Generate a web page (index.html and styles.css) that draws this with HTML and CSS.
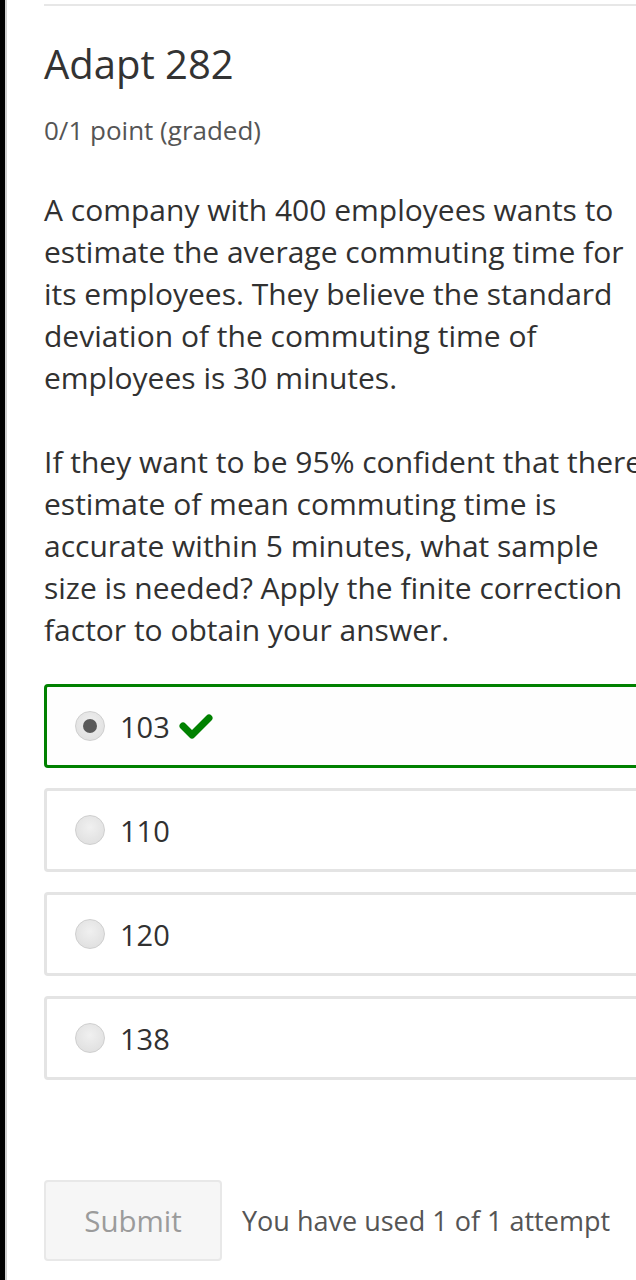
FILE: index.html
```html
<!DOCTYPE html>
<html>
<head>
<meta charset="utf-8">
<link rel="stylesheet" href="styles.css">
</head>
<body>
<div class="page">
  <div class="content">
    <hr class="rule">
    <h2 class="title">Adapt 282</h2>
    <div class="points">0/1 point (graded)</div>
    <div class="problem">
      <p>A company with 400 employees wants to estimate the average commuting time for its employees. They believe the standard deviation of the commuting time of employees is 30 minutes.</p>
      <p>If they want to be 95% confident that there estimate of mean commuting time is accurate within 5 minutes, what sample size is needed? Apply the finite correction factor to obtain your answer.</p>
    </div>
    <div class="choices">
      <label class="choice correct">
        <span class="radio checked"></span>
        <span class="val">103</span>
        <svg class="check" width="34" height="26" viewBox="0 0 34 26"><path d="M4 13 L13 22 L30 5" fill="none" stroke="#008100" stroke-width="7" stroke-linecap="round" stroke-linejoin="round"/></svg>
      </label>
      <label class="choice">
        <span class="radio"></span>
        <span class="val">110</span>
      </label>
      <label class="choice">
        <span class="radio"></span>
        <span class="val">120</span>
      </label>
      <label class="choice">
        <span class="radio"></span>
        <span class="val">138</span>
      </label>
    </div>
    <div class="actions">
      <button class="submit">Submit</button>
      <span class="attempts">You have used 1 of 1 attempt</span>
    </div>
  </div>
</div>
</body>
</html>
```
FILE: styles.css
```css
html, body {
  margin: 0;
  padding: 0;
  background: #fff;
  overflow: hidden;
}
.page {
  width: 636px;
  height: 1280px;
  border-left: 5px solid #000;
  box-shadow: inset 2px 0 0 #d0d0d0;
  box-sizing: border-box;
  overflow: hidden;
  font-family: "Open Sans", sans-serif;
  color: #313131;
}
.content {
  margin-left: 39px;
  width: 640px;
  padding-top: 4px;
}
.rule {
  margin: 0;
  border: 0;
  height: 2px;
  background: #e7e7e7;
}
.title {
  margin: 0;
  padding-top: 34px;
  font-size: 40px;
  font-weight: 400;
  line-height: 48px;
  color: #333;
}
.points {
  margin-top: 25px;
  font-size: 26px;
  line-height: 34px;
  color: #555;
}
.problem {
  margin-top: 42px;
  width: 605px;
  font-size: 30px;
  line-height: 42px;
  color: #313131;
}
.problem p {
  margin: 0 0 42px 0;
}
.problem p:last-child {
  margin-bottom: 0;
}
.choices {
  margin-top: 33px;
  display: flex;
  flex-direction: column;
  gap: 20px;
}
.choice {
  display: flex;
  align-items: center;
  height: 84px;
  box-sizing: border-box;
  border: 3px solid #e4e4e4;
  border-radius: 4px;
  padding-left: 28px;
  font-size: 29px;
  color: #313131;
  background: #fff;
}
.choice.correct {
  border-color: #008100;
  background: #fefefe;
}
.radio {
  width: 30px;
  height: 30px;
  border-radius: 50%;
  box-sizing: border-box;
  border: 1px solid #cfcfcf;
  background: radial-gradient(circle at 50% 40%, #f0f0f0, #dcdcdc);
  display: flex;
  align-items: center;
  justify-content: center;
}
.radio.checked::after {
  content: "";
  width: 14px;
  height: 14px;
  border-radius: 50%;
  background: #5a5a5a;
}
.val {
  margin-left: 15px;
}
.check {
  margin-left: 9px;
}
.actions {
  margin-top: 100px;
  display: flex;
  align-items: center;
  gap: 20px;
}
.submit {
  width: 178px;
  height: 81px;
  border: 2px solid #e8e8e8;
  border-radius: 4px;
  background: #f6f6f6;
  font-family: "Open Sans", sans-serif;
  font-size: 29.5px;
  color: #9b9b9b;
  padding: 0;
}
.attempts {
  font-size: 27px;
  color: #555;
}
```
